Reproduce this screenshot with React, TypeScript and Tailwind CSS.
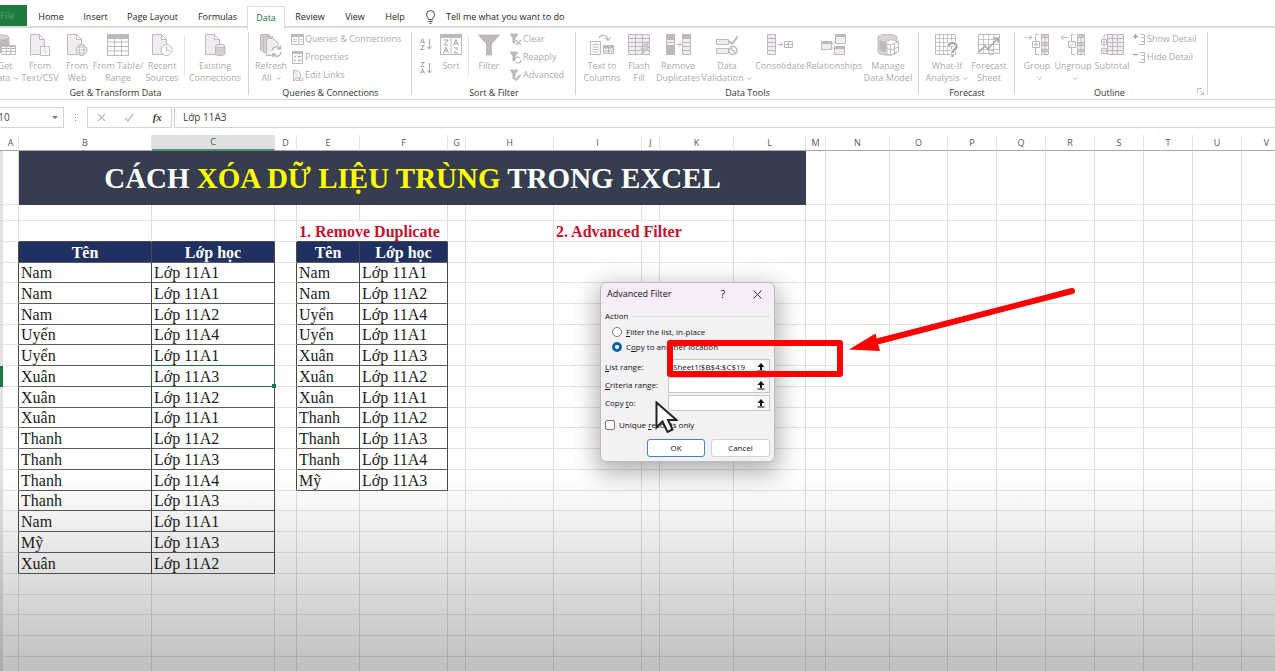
import type { ReactNode } from 'react'
import { useState } from 'react'
import clsx from 'clsx'

/* ---------- ribbon icons ---------- */

const G = '#bdb9bd'
const L = '#f1ecf1'

function Icon({ children, size = 22 }: { children: ReactNode; size?: number }) {
    return (
        <svg width={size} height={size} viewBox={`0 0 ${size} ${size}`} fill="none" stroke={G} className="block shrink-0">
            {children}
        </svg>
    )
}

const page = <path d="M1.500 .5h9l5 5v15h-14zM10.500 .5v5h5" fill={L} />

const icons: Record<string, ReactNode> = {
    getData: (
        <Icon>
            <path d="M1 3v13c0 3 14 3 14 0V3" fill={G} />
            <ellipse cx="8" cy="3.500" rx="7" ry="2.500" fill="#d8d4d8" />
            <path d="M7.500 11.500h14v9h-14z" fill="#fff" />
            <path d="M7.500 12.500h14M7.500 14.500h14M7.500 17.500h14M12 12v8M17 12v8" />
        </Icon>
    ),
    csv: (
        <Icon>
            {page}
            <path d="M11.500 12.500h9v9h-9z" fill="#fff" />
            <path d="M13.500 15h5M13.500 17h5M13.500 19h5" stroke="#ddd8dd" />
        </Icon>
    ),
    web: (
        <Icon>
            {page}
            <circle cx="15.500" cy="16" r="5.500" fill="#fff" />
            <ellipse cx="15.500" cy="16" rx="2.500" ry="5.500" />
            <path d="M10 16h11M11 13h9M11 19h9" />
        </Icon>
    ),
    table: (
        <Icon>
            <path d="M.5 .5h21v21H.5z" fill="#fff" />
            <path d="M.5 .5h21v4H.5z" fill={G} />
            <path d="M.5 8h21M.5 12.500h21M.5 17h21M7.500 4v17M14.500 4v17" />
        </Icon>
    ),
    recent: (
        <Icon>
            {page}
            <circle cx="15.500" cy="16" r="5.500" fill="#fff" />
            <path d="M15.500 12.500v4h3.500" />
        </Icon>
    ),
    existing: (
        <Icon>
            {page}
            <path d="M11.500 12v8c0 2 9.500 2 9.500 0v-8" fill="#d4d0d4" />
            <ellipse cx="16.200" cy="12" rx="4.700" ry="1.600" fill={L} />
        </Icon>
    ),
    refresh: (
        <Icon size={24}>
            <path d="M1.500 .5h9v16h-9z" fill="#d4d0d4" />
            <path d="M4.500 2.500h9v16h-9z" fill="#d4d0d4" />
            <path d="M7.500 4.500h7l4.500 4.500v12.500H7.500z" fill={L} />
            <circle cx="17.500" cy="17.500" r="6" fill="#fff" stroke="none" />
            <path d="M13 17a4.500 4.500 0 0 1 8-2.500M22 18a4.500 4.500 0 0 1-8 2.500M21.500 11.500v3.500H18M13.500 23.500V20H17" strokeWidth="1.400" />
        </Icon>
    ),
    sort: (
        <Icon>
            <path d="M.5 .5h21v20H.5z" fill="#fff" />
            <path d="M.5 .5h21v3H.5z" fill={G} />
            <path d="M11 4v16" />
            <path d="M4 6h4l-4 5h4M3.500 19l2.500-6 2.500 6M4.500 17h3M13.500 11.500L16 5.500l2.500 6M14.500 9.500h3M14 14h4l-4 5h4" stroke="#a8a4a8" />
        </Icon>
    ),
    filter: (
        <Icon>
            <path d="M.5 1h21l-8 9v11h-5V10z" fill={G} />
        </Icon>
    ),
    textToColumns: (
        <Icon size={24}>
            <path d="M.5 7.500h10v13H.5z" fill="#fff" />
            <path d="M2.500 10.500h6M2.500 13h6M2.500 15.500h6M2.500 18h6M9 4c2-4 8-4 9 2M15.500 4l2.500 2.500L20.500 3" strokeWidth="1.200" />
            <path d="M13.500 11.500h10v8h-10z" fill={L} />
            <path d="M13.500 12h10v2h-10z" fill={G} />
            <path d="M18.500 14v5M14 17h9" />
        </Icon>
    ),
    flashFill: (
        <Icon>
            <path d="M.5 .5h21v20H.5z" fill={L} />
            <path d="M.5 4.500h21M.5 8.500h21M.5 12.500h21M.5 16.500h21M7.500 .5v20M14.500 .5v20" />
            <path d="M18 8l-5 7h3l-3 6 8-8h-3l3-5z" fill="#d4d0d4" />
        </Icon>
    ),
    removeDup: (
        <Icon size={25}>
            <path d="M.5 .5h8v20h-8z" fill={L} />
            <path d="M.5 .5h8v5h-8zM.5 11.500h8v9h-8z" fill={G} />
            <path d="M.5 8.500h8M.5 15.500h8M10 10.500h5M13 8.500l2.500 2-2.500 2" />
            <path d="M16.500 .5h8v20h-8z" fill={L} />
            <path d="M16.500 .5h8v4h-8z" fill={G} />
            <path d="M16.500 8.500h8M16.500 12.500h8M16.500 16.500h8" />
        </Icon>
    ),
    validation: (
        <Icon>
            <path d="M.5 5.500h12v5H.5zM.5 14.500h12v5H.5z" fill={L} />
            <path d="M13 7l3 3 6-8" strokeWidth="2" />
            <circle cx="17" cy="16.500" r="4" fill="#fff" strokeWidth="1.500" />
            <path d="M14 13.500l6 6" strokeWidth="1.500" />
        </Icon>
    ),
    consolidate: (
        <Icon size={26}>
            <path d="M.5 .5h8v20h-8z" fill={L} />
            <path d="M.5 4.500h8M.5 8.500h8M.5 12.500h8M.5 16.500h8M10.500 10.500h5M13.500 8.500l2 2-2 2M17.500 7.500h8v6h-8zM17.500 10.500h8M21.500 7.500v6" />
        </Icon>
    ),
    relationships: (
        <Icon size={26}>
            <path d="M10.500 10.500l4-3M10.500 13l3 3" />
            <path d="M.5 7.500h10v8H.5zM14.500 .5h10v9h-10zM13.500 12.500h10v8h-10z" fill={L} />
            <path d="M.5 7.500h10v2H.5zM14.500 .5h10v2h-10zM13.500 12.500h10v2h-10z" fill={G} />
        </Icon>
    ),
    dataModel: (
        <Icon size={23}>
            <path d="M1 3c0-3.500 19-3.500 19 0v15c0 4-19 4-19 0z" fill="#d8d4d8" />
            <path d="M6.500 8.500l8-3 7 2.500v9l-8 4.500-7-3z" fill="#fff" />
            <path d="M6.500 8.500l7 2.500 8-3M13.500 11v10M6.500 13.500l7 2.500 8-3M10 10v9.500M17.500 10v9.500" />
            <path d="M3 7l6 1.500v9L3 16z" fill={G} />
        </Icon>
    ),
    whatIf: (
        <Icon size={24}>
            <path d="M.5 .5h20v20H.5z" fill="#fff" />
            <path d="M.5 4.500h20M.5 8.500h20M.5 12.500h20M.5 16.500h20M4.500 .5v20M8.500 .5v20M12.500 .5v20M16.500 .5v20" strokeWidth=".8" />
            <path d="M13.500 12.500c0-5 8-4.500 8 0 0 3-4 3-4 6.500M17.500 20.500v2.500" stroke="#fff" strokeWidth="4.500" />
            <path d="M13.500 12.500c0-5 8-4.500 8 0 0 3-4 3-4 6.500M17.500 20.500v2.500" stroke="#aca8ac" strokeWidth="2.400" />
        </Icon>
    ),
    forecast: (
        <Icon>
            <path d="M.5 .5h21v19H.5z" fill="#fff" />
            <path d="M.5 5.500h21M.5 10.500h21M.5 15.500h21M5.500 .5v19M10.500 .5v19M15.500 .5v19" strokeWidth=".8" />
            <path d="M1 18l6-6 3 3 10-11M15.500 4H20v4.500" stroke="#aca8ac" strokeWidth="1.600" />
            <circle cx="13" cy="18.500" r="2.500" />
        </Icon>
    ),
    group: (
        <Icon size={24}>
            <path d="M0 3.500h7M4.500 1l2.500 2.500L4.500 6M14 .5h-3.500V7M10.500 14v6.500H14M7.500 7.500h7v6h-7zM9 10.500h4M11 8.500v4" />
            <path d="M16.500 .5h7v20h-7z" fill={L} />
            <path d="M16.500 .5h7v3h-7zM16.500 8.500h7v3h-7zM16.500 15.500h7v2h-7z" fill="#d4d0d4" />
            <path d="M20 .5v20" />
        </Icon>
    ),
    ungroup: (
        <Icon size={24}>
            <path d="M0 3.500h7M2.500 1L0 3.500 2.500 6M14 .5h-3.500V7M10.500 14v6.500H14M7.500 7.500h7v6h-7zM8.500 13l5-5" />
            <path d="M16.500 .5h7v20h-7z" fill={L} />
            <path d="M16.500 .5h7v3h-7zM16.500 8.500h7v3h-7zM16.500 15.500h7v2h-7z" fill="#d4d0d4" />
            <path d="M20 .5v20" />
        </Icon>
    ),
    subtotal: (
        <Icon size={23}>
            <path d="M6.500 .5h16v20h-16z" fill={L} />
            <path d="M6.500 4.500h16M6.500 8.500h16M6.500 12.500h16M6.500 16.500h16M11.500 .5v20M16.500 .5v20" />
            <path d="M.5 5.500h5v5h-5zM.5 14.500h5v5h-5z" fill="#fff" />
            <path d="M1.500 8h3M3 6.500v3M1.500 17h3M3 15.500v3M3 5.500V1h3M3 10.500v4" />
        </Icon>
    ),
    az: (
        <Icon size={12}>
            <path d="M.5 5.500l2-5 2 5M1 4h3M.8 7.500h3.500l-3.500 4h3.500M9.500 1v10M7.500 8.500l2 2.500 2-2.500" stroke="#a8a4a8" />
        </Icon>
    ),
    za: (
        <Icon size={12}>
            <path d="M.8 .5h3.500l-3.500 4h3.500M.5 11.500l2-5 2 5M1 10h3M9.500 1v10M7.500 8.500l2 2.500 2-2.500" stroke="#a8a4a8" />
        </Icon>
    ),
    queries: (
        <Icon size={13}>
            <path d="M.5 1.500h12v10H.5z" fill="#fff" />
            <path d="M.5 1.500h12v2H.5z" fill={G} />
            <path d="M7.500 4v7M2 6.500h4M2 8.500h4M8.500 6.500h3M8.500 9h3" strokeWidth=".8" />
        </Icon>
    ),
    properties: (
        <Icon size={13}>
            <path d="M1.500 .5h10v12h-10z" fill="#fff" />
            <path d="M1.500 .5h10v2h-10z" fill={G} />
            <path d="M3 5.500h2M6.500 5.500h4M3 9.500h2M6.500 9.500h4" strokeWidth="1.500" />
        </Icon>
    ),
    editLinks: (
        <Icon size={13}>
            <path d="M2.500 12V1.500h4l3 3V8M2.500 11.500H4" fill={L} />
            <rect x="4.500" y="9" width="4" height="2.500" rx="1.200" />
            <rect x="8" y="9" width="4" height="2.500" rx="1.200" />
        </Icon>
    ),
    clear: (
        <Icon size={13}>
            <path d="M1 1h8L6 5v5H4V5z" fill={G} />
            <path d="M7 7l5 5M12 7l-5 5" strokeWidth="1.200" />
        </Icon>
    ),
    reapply: (
        <Icon size={13}>
            <path d="M1 1h8L6 5v5H4V5z" fill={G} />
            <circle cx="9" cy="9" r="3" fill="#fff" strokeDasharray="7 2.400" strokeWidth="1.200" />
        </Icon>
    ),
    advanced: (
        <Icon size={13}>
            <path d="M1 1h8L6 5v5H4V5z" fill={G} />
            <path d="M6.500 11.500L11.500 6" strokeWidth="2" />
        </Icon>
    ),
    showDetail: (
        <Icon size={13}>
            <path d="M0 3.500h5M2.500 1v5" stroke="#a8a4a8" strokeWidth="1.400" />
            <path d="M7 1.500h4.500v10H6M8 4.500h3M8 8.500h3" />
        </Icon>
    ),
    hideDetail: (
        <Icon size={13}>
            <path d="M0 3.500h5" stroke="#a8a4a8" strokeWidth="1.400" />
            <path d="M7 1.500h4.500v10H6M8 4.500h3M8 8.500h3" />
        </Icon>
    ),
}

/* ---------- ribbon ---------- */

function Caret() {
    return (
        <svg width="5" height="4" viewBox="0 0 5 4" fill="none" stroke="#b5b1b5" className="ml-1 inline-block align-middle">
            <path d="M.5 .5l2 2 2-2" />
        </svg>
    )
}

interface BigProps {
    icon: string
    lines: string[]
    caret?: boolean
    className: string
}

function BigButton({ icon, lines, caret, className }: BigProps) {
    return (
        <button type="button" className={clsx('flex shrink-0 flex-col items-center whitespace-nowrap pt-1.5 text-[#aeaaae]', className)}>
            <span className="flex h-[26px] items-start">{icons[icon]}</span>
            {lines.map((line, i) => (
                <span key={i} className="block h-3 leading-3">
                    {line}
                    {caret && i === lines.length - 1 && <Caret />}
                </span>
            ))}
        </button>
    )
}

function SmallButtons({ items }: { items: [string, string][] }) {
    return (
        <div className="flex flex-col pt-0.5">
            {items.map(([icon, label]) => (
                <button key={label} type="button" className="flex h-[18px] items-center gap-px whitespace-nowrap text-[#aeaaae]">
                    {icons[icon]}
                    {label}
                </button>
            ))}
        </div>
    )
}

function RibbonGroup({ label, className, children }: { label: string; className: string; children: ReactNode }) {
    return (
        <section className={clsx('relative flex shrink-0 flex-col', className)}>
            <div className="flex h-[59px]">{children}</div>
            <h2 className="text-center leading-3 text-[#333]">{label}</h2>
            <span className="absolute top-1 right-0 bottom-1 w-px bg-[#d6d2d6]" />
        </section>
    )
}

function Divider() {
    return <span className="mt-2 h-10 w-px shrink-0 bg-[#e6e2e6]" />
}

function Ribbon() {
    return (
        <div className="flex h-[72px] shrink-0 overflow-hidden border-b border-[#d6d2d6] text-[9px]">
            <RibbonGroup label="Get & Transform Data" className="-ml-[18px] w-[267px]">
                <BigButton icon="getData" lines={['Get', 'Data']} caret className="ml-1.5 w-[34px]" />
                <BigButton icon="csv" lines={['From', 'Text/CSV']} className="w-9" />
                <BigButton icon="web" lines={['From', 'Web']} className="w-[38px]" />
                <BigButton icon="table" lines={['From Table/', 'Range']} className="w-11" />
                <BigButton icon="recent" lines={['Recent', 'Sources']} className="w-11" />
                <Divider />
                <BigButton icon="existing" lines={['Existing', 'Connections']} className="w-15" />
            </RibbonGroup>
            <RibbonGroup label="Queries & Connections" className="w-[163px]">
                <BigButton icon="refresh" lines={['Refresh', 'All']} caret className="ml-0.5 w-10" />
                <SmallButtons
                    items={[
                        ['queries', 'Queries & Connections'],
                        ['properties', 'Properties'],
                        ['editLinks', 'Edit Links'],
                    ]}
                />
            </RibbonGroup>
            <RibbonGroup label="Sort & Filter" className="w-[164px]">
                <div className="ml-2 flex w-3.5 flex-col gap-3 pt-2.5">
                    <button type="button" aria-label="Sort A to Z">{icons.az}</button>
                    <button type="button" aria-label="Sort Z to A">{icons.za}</button>
                </div>
                <BigButton icon="sort" lines={['Sort']} className="w-[34px]" />
                <Divider />
                <BigButton icon="filter" lines={['Filter']} className="w-10" />
                <SmallButtons
                    items={[
                        ['clear', 'Clear'],
                        ['reapply', 'Reapply'],
                        ['advanced', 'Advanced'],
                    ]}
                />
            </RibbonGroup>
            <RibbonGroup label="Data Tools" className="w-[343px]">
                <BigButton icon="textToColumns" lines={['Text to', 'Columns']} className="ml-1.5 w-10" />
                <BigButton icon="flashFill" lines={['Flash', 'Fill']} className="w-[34px]" />
                <BigButton icon="removeDup" lines={['Remove', 'Duplicates']} className="w-11" />
                <BigButton icon="validation" lines={['Data', 'Validation']} caret className="w-[54px]" />
                <BigButton icon="consolidate" lines={['Consolidate']} className="w-[52px]" />
                <BigButton icon="relationships" lines={['Relationships']} className="w-14" />
                <BigButton icon="dataModel" lines={['Manage', 'Data Model']} className="w-[52px]" />
            </RibbonGroup>
            <RibbonGroup label="Forecast" className="w-24">
                <BigButton icon="whatIf" lines={['What-If', 'Analysis']} caret className="ml-1.5 w-11" />
                <BigButton icon="forecast" lines={['Forecast', 'Sheet']} className="w-10" />
            </RibbonGroup>
            <RibbonGroup label="Outline" className="w-[193px] pr-1">
                <BigButton icon="group" lines={['Group', '']} caret className="ml-1 w-9" />
                <BigButton icon="ungroup" lines={['Ungroup', '']} caret className="w-9" />
                <BigButton icon="subtotal" lines={['Subtotal']} className="w-[42px]" />
                <SmallButtons
                    items={[
                        ['showDetail', 'Show Detail'],
                        ['hideDetail', 'Hide Detail'],
                    ]}
                />
                <svg width="7" height="7" viewBox="0 0 7 7" fill="none" stroke="#c4c0c4" className="absolute right-1 bottom-1">
                    <path d="M.5 5V.5H5M2.500 2.500l4 4M6.500 3.500v3h-3" />
                </svg>
            </RibbonGroup>
        </div>
    )
}

const TABS = [
    { label: 'Home', width: 'w-[46px]' },
    { label: 'Insert', width: 'w-[43px]' },
    { label: 'Page Layout', width: 'w-[71px]' },
    { label: 'Formulas', width: 'w-[59px]' },
    { label: 'Data', width: 'w-9' },
    { label: 'Review', width: 'w-[50px]' },
    { label: 'View', width: 'w-10' },
    { label: 'Help', width: 'w-10' },
]

function TabBar() {
    const [active, setActive] = useState('Data')

    return (
        <nav className="flex h-7 shrink-0 items-end border-b-2 border-[#dedade] pt-[5px] text-[9px] text-[#262626]">
            <button type="button" className="h-full w-[27px] bg-[#1e7c40] pr-3.5 text-[#5f9f74]">
                File
            </button>
            <span className="w-px" />
            {TABS.map((tab) => (
                <button
                    key={tab.label}
                    type="button"
                    onClick={() => setActive(tab.label)}
                    className={clsx(
                        'h-full text-center whitespace-nowrap',
                        tab.width,
                        active === tab.label
                            ? '-mb-1 box-content border-x border-t border-[#dedade] bg-white pb-0.5 text-[#217346]'
                            : 'pt-0.5',
                    )}
                >
                    {tab.label}
                </button>
            ))}
            <button type="button" className="ml-2.5 flex h-full items-center gap-2.5 pt-0.5 whitespace-nowrap">
                <svg width="11" height="14" viewBox="0 0 11 14" fill="none" stroke="#444">
                    <path d="M3.500 9.500C3.500 7.500 1.500 7 1.500 4.500a4 4 0 0 1 8 0c0 2.500-2 3-2 5zM3.500 11.500h4M4.500 13.300h2" />
                </svg>
                Tell me what you want to do
            </button>
        </nav>
    )
}

function FormulaBar({ value }: { value: string }) {
    return (
        <div className="flex h-[21px] shrink-0 items-stretch text-[10px] text-[#444]">
            <div className="flex w-16 items-center border border-l-0 border-[#d6d2d6]">
                <input aria-label="Name box" defaultValue="C10" className="-ml-2 w-15 outline-none" />
                <svg width="6" height="3" viewBox="0 0 6 3" className="shrink-0">
                    <path d="M0 0h6L3 3z" fill="#777" />
                </svg>
            </div>
            <div className="flex w-[23px] flex-col items-center justify-center gap-0.5">
                <span className="size-px bg-[#888]" />
                <span className="size-px bg-[#888]" />
                <span className="size-px bg-[#888]" />
            </div>
            <div className="flex w-[85px] items-center justify-around border border-[#d6d2d6]">
                <button type="button" aria-label="Cancel">
                    <svg width="9" height="9" viewBox="0 0 9 9" stroke="#bbb" strokeWidth="1.200">
                        <path d="M1 1l7 7M8 1L1 8" />
                    </svg>
                </button>
                <button type="button" aria-label="Enter">
                    <svg width="10" height="9" viewBox="0 0 10 9" fill="none" stroke="#c2c2c2" strokeWidth="1.600">
                        <path d="M1 5l3 3 5-7" />
                    </svg>
                </button>
                <button type="button" className="font-['Liberation_Serif',serif] text-[11px] font-bold italic">
                    fx
                </button>
            </div>
            <input
                aria-label="Formula"
                defaultValue={value}
                className="ml-0.5 min-w-0 flex-1 border border-r-0 border-[#d6d2d6] px-2 outline-none"
            />
        </div>
    )
}

/* ---------- sheet ---------- */

const COLUMNS = [
    { name: 'A', width: 'w-4' },
    { name: 'B', width: 'w-[133px]' },
    { name: 'C', width: 'w-[123px]' },
    { name: 'D', width: 'w-[22px]' },
    { name: 'E', width: 'w-[63px]' },
    { name: 'F', width: 'w-[88px]' },
    { name: 'G', width: 'w-[18px]' },
    { name: 'H', width: 'w-[88px]' },
    { name: 'I', width: 'w-[88px]' },
    { name: 'J', width: 'w-[18px]' },
    { name: 'K', width: 'w-[74px]' },
    { name: 'L', width: 'w-[72px]' },
    { name: 'M', width: 'w-5' },
    { name: 'N', width: 'w-16' },
    { name: 'O', width: 'w-[58px]' },
    { name: 'P', width: 'w-[49px]' },
    { name: 'Q', width: 'w-[49px]' },
    { name: 'R', width: 'w-[49px]' },
    { name: 'S', width: 'w-[49px]' },
    { name: 'T', width: 'w-[49px]' },
    { name: 'U', width: 'w-[49px]' },
    { name: 'V', width: 'w-auto' },
]

const STUDENTS = [
    ['Nam', 'Lớp 11A1'],
    ['Nam', 'Lớp 11A1'],
    ['Nam', 'Lớp 11A2'],
    ['Uyển', 'Lớp 11A4'],
    ['Uyển', 'Lớp 11A1'],
    ['Xuân', 'Lớp 11A3'],
    ['Xuân', 'Lớp 11A2'],
    ['Xuân', 'Lớp 11A1'],
    ['Thanh', 'Lớp 11A2'],
    ['Thanh', 'Lớp 11A3'],
    ['Thanh', 'Lớp 11A4'],
    ['Thanh', 'Lớp 11A3'],
    ['Nam', 'Lớp 11A1'],
    ['Mỹ', 'Lớp 11A3'],
    ['Xuân', 'Lớp 11A2'],
]

const UNIQUE = [
    ['Nam', 'Lớp 11A1'],
    ['Nam', 'Lớp 11A2'],
    ['Uyển', 'Lớp 11A4'],
    ['Uyển', 'Lớp 11A1'],
    ['Xuân', 'Lớp 11A3'],
    ['Xuân', 'Lớp 11A2'],
    ['Xuân', 'Lớp 11A1'],
    ['Thanh', 'Lớp 11A2'],
    ['Thanh', 'Lớp 11A3'],
    ['Thanh', 'Lớp 11A4'],
    ['Mỹ', 'Lớp 11A3'],
]

const HEADER = ['Tên', 'Lớp học']
const ROW_COUNT = 26
const SHORT_ROWS = [1, 4, 8, 12, 17, 22]
const ACTIVE = { row: 6, col: 2 }

// Row 0 is the header row of both lists; B:C holds the source, E:F the result.
function cellText(row: number, col: number) {
    if (row < 0) return undefined
    if (col === 1 || col === 2) return [HEADER, ...STUDENTS][row]?.[col - 1]
    if (col === 4 || col === 5) return [HEADER, ...UNIQUE][row]?.[col - 4]
    return undefined
}

function Cell({ row, col }: { row: number; col: number }) {
    const text = cellText(row, col)
    const isHead = row === 0 && text !== undefined
    const isActive = row === ACTIVE.row && col === ACTIVE.col
    const darkRight = text !== undefined || cellText(row, col + 1) !== undefined
    const darkBottom = text !== undefined || cellText(row + 1, col) !== undefined

    return (
        <td
            className={clsx(
                'border-r border-b p-0 whitespace-nowrap',
                isActive && 'relative',
                darkRight ? 'border-r-[#4a474a]' : 'border-r-[#e0dde0]',
                darkBottom ? 'border-b-[#5e5b5e]' : 'border-b-[#e6e3e6]',
                isHead ? 'bg-[#203060] text-center font-bold text-white' : 'pl-0.5',
            )}
        >
            {text}
            {isActive && (
                <span className="absolute -inset-px z-10 border border-[#217346]">
                    <span className="absolute -right-0.5 -bottom-0.5 size-1 bg-[#217346]" />
                </span>
            )}
        </td>
    )
}

function EmptyCells({ from, to }: { from: number; to: number }) {
    return (
        <>
            {COLUMNS.slice(from, to).map((col) => (
                <td key={col.name} className="border-r border-b border-r-[#e0dde0] border-b-[#e6e3e6] p-0" />
            ))}
        </>
    )
}

function RowHead({ active }: { active?: boolean }) {
    return <th className={clsx('p-0', active ? 'bg-[#217346]' : 'bg-[#e4e1e4]')} />
}

function Sheet() {
    return (
        <table className="w-[calc(100%+17px)] table-fixed border-separate border-spacing-0 font-['Liberation_Serif','Times_New_Roman',serif] text-base leading-[19px] text-[#1c1c1c]">
            <colgroup>
                <col className="w-[3px]" />
                {COLUMNS.map((col) => (
                    <col key={col.name} className={col.width} />
                ))}
            </colgroup>
            <thead className="font-['Open_Sans','Noto_Sans',sans-serif] text-[9px] leading-[14px] text-[#555]">
                <tr>
                    <th className="h-4 border-b border-[#aaa7aa] p-0" />
                    {COLUMNS.map((col) => (
                        <th
                            key={col.name}
                            className={clsx(
                                'h-4 border-r border-r-[#e6e3e6] p-0 font-normal',
                                col.name === 'C' ? 'border-b-2 border-b-[#4f9468] bg-[#e1dfe1] text-[#217346]' : 'border-b border-b-[#aaa7aa]',
                            )}
                        >
                            {col.name}
                        </th>
                    ))}
                </tr>
            </thead>
            <tbody>
                <tr className="h-[54px]">
                    <RowHead />
                    <EmptyCells from={0} to={1} />
                    <td colSpan={11} className="bg-[#353d4f] p-0 text-center text-[29px] leading-[52px] font-bold whitespace-nowrap text-white">
                        CÁCH <span className="text-[#ffff00]">XÓA DỮ LIỆU TRÙNG</span> TRONG EXCEL
                    </td>
                    <EmptyCells from={12} to={22} />
                </tr>
                <tr className="h-4">
                    <RowHead />
                    <EmptyCells from={0} to={22} />
                </tr>
                <tr className="h-[21px] font-bold text-[#c8102e]">
                    <RowHead />
                    <td className="border-r border-b border-r-[#e0dde0] border-b-[#e6e3e6] p-0" />
                    <td className="border-r border-b border-r-[#e0dde0] border-b-[#4a474a] p-0" />
                    <td className="border-r border-b border-r-[#e0dde0] border-b-[#4a474a] p-0" />
                    <EmptyCells from={3} to={4} />
                    <td colSpan={2} className="border-r border-b border-r-[#e0dde0] border-b-[#4a474a] p-0 pl-0.5 whitespace-nowrap">
                        1. Remove Duplicate
                    </td>
                    <EmptyCells from={6} to={8} />
                    <td colSpan={3} className="border-r border-b border-r-[#e0dde0] border-b-[#e6e3e6] p-0 pl-0.5 whitespace-nowrap">
                        2. Advanced Filter
                    </td>
                    <EmptyCells from={11} to={22} />
                </tr>
                {Array.from({ length: ROW_COUNT }, (_, row) => (
                    <tr key={row} className={SHORT_ROWS.includes(row) ? 'h-5' : 'h-[21px]'}>
                        <RowHead active={row === ACTIVE.row} />
                        {COLUMNS.map((col, i) => (
                            <Cell key={col.name} row={row} col={i} />
                        ))}
                    </tr>
                ))}
            </tbody>
        </table>
    )
}

/* ---------- Advanced Filter dialog ---------- */

function RangeField({ id, label, value }: { id: string; label: ReactNode; value?: string }) {
    return (
        <div className="flex h-[18px] items-center">
            <label htmlFor={id} className="w-[63px] whitespace-nowrap">
                {label}
            </label>
            <div className="flex h-4 min-w-0 flex-1 border border-[#c9c6c9] bg-white">
                <input id={id} defaultValue={value} className="w-0 min-w-0 flex-1 px-1 outline-none" />
                <button type="button" aria-label="Collapse dialog" className="flex w-4 items-center justify-center bg-[#f7f5f7]">
                    <svg width="8" height="9" viewBox="0 0 8 9" fill="#111">
                        <path d="M4 0l3.500 4H5v3H3V4H.5zM.5 7.500h7v1h-7z" />
                    </svg>
                </button>
            </div>
        </div>
    )
}

const radioClass =
    'size-2.5 shrink-0 appearance-none rounded-full border border-[#777] bg-white checked:border-[3px] checked:border-[#0f62ac]'

function AdvancedFilterDialog() {
    const [mode, setMode] = useState('copy')

    return (
        <form
            role="dialog"
            aria-labelledby="dialog-title"
            onSubmit={(e) => e.preventDefault()}
            className="absolute top-[282px] left-[600px] w-[175px] rounded-md border border-[#bdb9bd] bg-[#f3f1f4] pb-1 text-[8px] leading-3 text-[#111] shadow-[0_8px_24px_4px_rgba(0,0,0,0.3)]"
        >
            <header className="flex h-[22px] items-center rounded-t-md bg-[#f8ecfa] pl-1.5">
                <h2 id="dialog-title" className="flex-1 text-[9px]">
                    Advanced Filter
                </h2>
                <button type="button" aria-label="Help" className="w-[34px] text-[10px]">
                    ?
                </button>
                <button type="button" aria-label="Close" className="flex w-[34px] justify-center">
                    <svg width="9" height="9" viewBox="0 0 9 9" stroke="#333">
                        <path d="M.5 .5l8 8M8.500 .5l-8 8" />
                    </svg>
                </button>
            </header>
            <div className="px-1 pt-[5px]">
                <fieldset>
                    <legend className="flex w-full items-center gap-1">
                        Action
                        <span className="h-px flex-1 bg-[#dfdcdf]" />
                    </legend>
                    <div className="flex flex-col pt-0.5 pl-[7px]">
                        <label className="flex h-[15px] items-center gap-1">
                            <input
                                type="radio"
                                name="mode"
                                className={radioClass}
                                checked={mode === 'filter'}
                                onChange={() => setMode('filter')}
                            />
                            <span>
                                <u>F</u>ilter the list, in-place
                            </span>
                        </label>
                        <label className="flex h-[15px] items-center gap-1">
                            <input
                                type="radio"
                                name="mode"
                                className={radioClass}
                                checked={mode === 'copy'}
                                onChange={() => setMode('copy')}
                            />
                            <span>
                                C<u>o</u>py to another location
                            </span>
                        </label>
                    </div>
                </fieldset>
                <div className="pt-1">
                    <RangeField id="list-range" label={<><u>L</u>ist range:</>} value="Sheet1!$B$4:$C$19" />
                    <RangeField id="criteria-range" label={<><u>C</u>riteria range:</>} />
                    <RangeField id="copy-to" label={<>Copy <u>t</u>o:</>} />
                </div>
                <label className="mt-1.5 flex h-3.5 items-center gap-1">
                    <input type="checkbox" className="size-2.5 appearance-none rounded-[2px] border border-[#777] bg-white checked:bg-[#0f62ac]" />
                    <span>
                        Unique <u>r</u>ecords only
                    </span>
                </label>
                <div className="mt-[7px] flex justify-end gap-1.5">
                    <button type="submit" className="h-[18px] w-[58px] rounded-[3px] border border-[#3f87c4] bg-white">
                        OK
                    </button>
                    <button type="button" className="h-[18px] w-[59px] rounded-[3px] border border-[#d4d1d4] bg-white">
                        Cancel
                    </button>
                </div>
            </div>
        </form>
    )
}

/* ---------- overlays ---------- */

function Highlight() {
    return (
        <>
            <div className="pointer-events-none absolute top-[340px] left-[667px] h-[37px] w-44 rounded-[3px] border-6 border-[#ff0000]" />
            <svg width="226" height="66" viewBox="0 0 226 66" className="pointer-events-none absolute top-[286px] left-[849px]">
                <path d="M223 5L30 55" stroke="#f00" strokeWidth="6" strokeLinecap="round" />
                <path d="M0 63.500L26.500 47.500 31 65z" fill="#f00" />
            </svg>
            <svg width="23" height="34" viewBox="0 0 23 34" className="pointer-events-none absolute top-[401px] left-[655px]">
                <path d="M1.500 1.500v25l6-6 5 10.500 5-2.500-4.500-9.500h8.500z" fill="#fff" stroke="#222" strokeWidth="2" />
            </svg>
        </>
    )
}

export default function App() {
    return (
        <div className="relative flex h-screen flex-col overflow-hidden bg-white font-['Open_Sans','Noto_Sans',sans-serif]">
            <TabBar />
            <Ribbon />
            <div className="h-[7px] shrink-0" />
            <FormulaBar value="Lớp 11A3" />
            <div className="h-[7px] shrink-0" />
            <main className="relative min-h-0 flex-1 overflow-hidden">
                <Sheet />
                <div className="pointer-events-none absolute inset-x-0 bottom-0 h-[196px] bg-linear-to-b from-black/0 to-black/25" />
            </main>
            <AdvancedFilterDialog />
            <Highlight />
        </div>
    )
}
